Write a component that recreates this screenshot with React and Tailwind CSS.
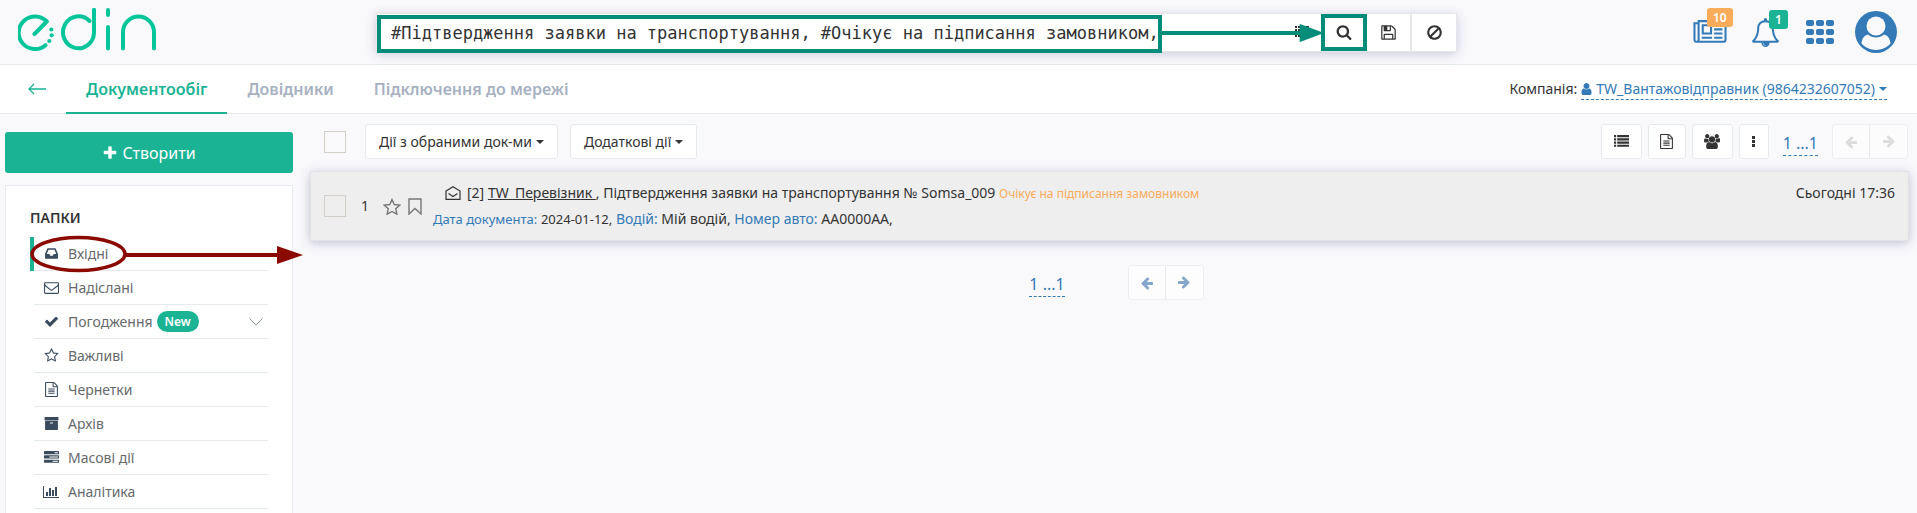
import React from "react";

const ICONS = {
  search: { box: "0 0 1792 1792", d: "M1216 832q0-185-131.500-316.500t-316.500-131.500-316.500 131.500-131.500 316.500 131.500 316.500 316.500 131.500 316.500-131.500 131.500-316.500zm512 832q0 52-38 90t-90 38q-54 0-90-38l-343-342q-179 124-399 124-143 0-273.500-55.500t-225-150-150-225-55.500-273.500 55.500-273.500 150-225 225-150 273.500-55.500 273.500 55.500 225 150 150 225 55.500 273.500q0 220-124 399l343 343q37 37 37 90z" },
  save: { box: "0 0 1792 1792", d: "M512 1536h768v-384h-768v384zm896 0h128v-896q0-14-10-38.500t-20-34.500l-281-281q-10-10-34-20t-39-10v416q0 40-28 68t-68 28h-576q-40 0-68-28t-28-68v-416h-128v1280h128v-416q0-40 28-68t68-28h832q40 0 68 28t28 68v416zm-384-928v-320q0-13-9.500-22.500t-22.500-9.500h-192q-13 0-22.500 9.500t-9.500 22.500v320q0 13 9.500 22.500t22.500 9.500h192q13 0 22.500-9.500t9.500-22.500zm640 32v928q0 40-28 68t-68 28h-1344q-40 0-68-28t-28-68v-1344q0-40 28-68t68-28h928q40 0 88 20t76 48l280 280q28 28 48 76t20 88z" },
  ban: { box: "0 0 1792 1792", d: "M1440 893q0-161-87-295l-754 753q137 89 297 89 111 0 211.500-43.500t173.500-116.500 116-174.500 43-212.500zm-999 299l755-754q-135-91-300-91-148 0-273 73t-198 199-73 274q0 162 89 299zm1223-299q0 157-61 300t-163.500 246-245 164-298.500 61-298.500-61-245-164-163.500-246-61-300 61-299.500 163.500-245.500 245-164 298.500-61 298.500 61 245 164 163.500 245.500 61 299.500z" },
  file: { box: "0 0 1792 1792", d: "M1596 380q28 28 48 76t20 88v1152q0 40-28 68t-68 28h-1344q-40 0-68-28t-28-68v-1600q0-40 28-68t68-28h896q40 0 88 20t76 48zm-444-244v376h376q-10-29-22-41l-313-313q-12-12-41-22zm384 1528v-1024h-416q-40 0-68-28t-28-68v-416h-768v1536h1280zm-1024-864q0-14 9-23t23-9h704q14 0 23 9t9 23v64q0 14-9 23t-23 9h-704q-14 0-23-9t-9-23v-64zm736 224q14 0 23 9t9 23v64q0 14-9 23t-23 9h-704q-14 0-23-9t-9-23v-64q0-14 9-23t23-9h704zm0 256q14 0 23 9t9 23v64q0 14-9 23t-23 9h-704q-14 0-23-9t-9-23v-64q0-14 9-23t23-9h704z" },
  star: { box: "0 0 1792 1792", d: "M1201 1004l306-297-422-62-189-382-189 382-422 62 306 297-73 421 378-199 377 199zm527-357q0 22-26 48l-363 354 86 500q1 7 1 20 0 50-41 50-19 0-40-12l-449-236-449 236q-22 12-40 12-21 0-31.500-14.500t-10.500-35.500q0-6 2-20l86-500-364-354q-25-27-25-48 0-37 56-46l502-73 225-455q19-41 49-41t49 41l225 455 502 73q56 9 56 46z" },
  check: { box: "0 0 1792 1792", d: "M1671 566q0 40-28 68l-724 724-136 136q-28 28-68 28t-68-28l-136-136-362-362q-28-28-28-68t28-68l136-136q28-28 68-28t68 28l294 295 656-657q28-28 68-28t68 28l136 136q28 28 28 68z" },
  plus: { box: "0 0 1792 1792", d: "M1600 736v192q0 40-28 68t-68 28h-416v416q0 40-28 68t-68 28h-192q-40 0-68-28t-28-68v-416h-416q-40 0-68-28t-28-68v-192q0-40 28-68t68-28h416v-416q0-40 28-68t68-28h192q40 0 68 28t28 68v416h416q40 0 68 28t28 68z" },
  arrow: { box: "0 0 1792 1792", d: "M1664 896v128q0 53-32.500 90.500t-84.500 37.500h-704l293 294q38 36 38 90t-38 90l-75 76q-37 37-90 37-52 0-91-37l-651-652q-37-37-37-90 0-52 37-91l651-650q38-38 91-38 52 0 90 38l75 74q38 38 38 91t-38 91l-293 293h704q52 0 84.500 37.500t32.500 90.500z" },
  envelope: { box: "0 0 1792 1792", d: "M1664 1504v-768q-32 36-69 66-268 206-426 338-51 43-83 67t-86.500 48.500-102.500 24.500h-2q-48 0-102.500-24.500t-86.500-48.500-83-67q-158-132-426-338-37-30-69-66v768q0 13 9.500 22.500t22.500 9.500h1472q13 0 22.500-9.500t9.500-22.500zm0-1051v-24.500l-.5-13-3-12.500-5.500-9-9-7.500-14-2.500h-1472q-13 0-22.500 9.500t-9.500 22.500q0 168 147 284 193 152 401 317 6 5 35 29.500t46 37.500 44.500 31.500 50.500 27.500 43 9h2q20 0 43-9t50.500-27.500 44.500-31.500 46-37.500 35-29.500q208-165 401-317 54-43 100.500-115.500t46.500-131.500zm128-37v1088q0 66-47 113t-113 47h-1472q-66 0-113-47t-47-113v-1088q0-66 47-113t113-47h1472q66 0 113 47t47 113z" },
  inbox: { box: "0 0 1792 1792", d: "M1151 960h316q-1-3-2.500-8t-2.500-8l-212-496h-708l-212 496q-1 2-2.500 8t-2.500 8h316l95 192h320zm513 30v482q0 26-19 45t-45 19h-1408q-26 0-45-19t-19-45v-482q0-62 25-123l238-552q10-25 36.500-42t52.500-17h832q26 0 52.500 17t36.500 42l238 552q25 61 25 123z" },
  archive: { box: "0 0 1792 1792", d: "M1088 832q0-26-19-45t-45-19h-256q-26 0-45 19t-19 45 19 45 45 19h256q26 0 45-19t19-45zm576-192v960q0 26-19 45t-45 19h-1408q-26 0-45-19t-19-45v-960q0-26 19-45t45-19h1408q26 0 45 19t19 45zm64-448v256q0 26-19 45t-45 19h-1536q-26 0-45-19t-19-45v-256q0-26 19-45t45-19h1536q26 0 45 19t19 45z" },
  chart: { box: "0 0 2048 1792", d: "M640 896v512h-256v-512h256zm384-512v1024h-256v-1024h256zm1024 1152v128h-2048v-1536h128v1408h1920zm-640-896v768h-256v-768h256zm384-384v1152h-256v-1152h256z" },
  user: { box: "192 0 1408 1792", d: "M1536 1399q0 109-62.500 187t-150.500 78h-854q-88 0-150.500-78t-62.500-187q0-85 8.500-160.500t31.500-152 58.500-131 94-89 134.500-34.500q131 128 313 128t313-128q76 0 134.500 34.500t94 89 58.500 131 31.500 152 8.500 160.500zm-256-887q0 159-112.500 271.500t-271.500 112.500-271.500-112.500-112.500-271.500 112.500-271.500 271.500-112.500 271.500 112.500 112.500 271.500z" },
  news: { box: "0 0 2048 1792", d: "M1024 512h-384v384h384v-384zm128 640v128h-640v-128h640zm0-768v640h-640v-640h640zm640 768v128h-512v-128h512zm0-256v128h-512v-128h512zm0-256v128h-512v-128h512zm0-256v128h-512v-128h512zm-1536 960v-960h-128v960q0 26 19 45t45 19 45-19 19-45zm1664 0v-1088h-1536v1088q0 33-11 64h1483q26 0 45-19t19-45zm128-1216v1216q0 80-56 136t-136 56h-1664q-80 0-136-56t-56-136v-1088h256v-128h1792z" },
  bell: { box: "0 0 1792 1792", d: "M912 1696q0-16-16-16-59 0-101.500-42.500t-42.500-101.500q0-16-16-16t-16 16q0 73 51.500 124.500t124.500 51.500q16 0 16-16zm-666-288h1300q-266-300-266-832 0-51-24-105t-69-103-121.500-80.500-169.500-31.500-169.500 31.500-121.500 80.500-69 103-24 105q0 532-266 832zm1482 0q0 52-38 90t-90 38h-448q0 106-75 181t-181 75-181-75-75-181h-448q-52 0-90-38t-38-90q50-42 91-88t85-119.500 74.500-158.500 50-206 19.500-260q0-152 117-282.500t307-158.500q-8-19-8-39 0-40 28-68t68-28 68 28 28 68q0 20-8 39 190 28 307 158.500t117 282.500q0 139 19.500 260t50 206 74.500 158.500 85 119.500 91 88z" },
  users: { box: "-64 0 1920 1792", d: "M529 896q-162 5-265 128h-134q-82 0-138-40.500t-56-118.500q0-353 124-353 6 0 43.500 21t97.500 42.500 119 21.500q67 0 133-23-5 37-5 66 0 159 93 290zm1071 637q0 120-73 189.500t-194 69.500h-874q-121 0-194-69.500t-73-189.500q0-53 3.500-103.500t14-109 26.500-108.500 43-97.500 62-81 85.500-53.500 111.500-20q10 0 43 21.500t73 48 107 48 135 21.500 135-21.500 107-48 73-48 43-21.500q61 0 111.500 20t85.500 53.500 62 81 43 97.500 26.500 108.500 14 109 3.500 103.500zm-1024-1277q0 106-75 181t-181 75-181-75-75-181 75-181 181-75 181 75 75 181zm704 384q0 159-112.500 271.500t-271.500 112.500-271.500-112.500-112.500-271.500 112.500-271.500 271.500-112.500 271.500 112.500 112.500 271.500zm576 225q0 78-56 118.500t-138 40.500h-134q-103-123-265-128 93-131 93-290 0-29-5-66 66 23 133 23 59 0 119-21.500t97.500-42.500 43.500-21q124 0 124 353zm-128-609q0 106-75 181t-181 75-181-75-75-181 75-181 181-75 181 75 75 181z" },
  list: { box: "0 0 14 14", d: "M0 1h2v2h-2zM3 1h11v2h-11zM0 4h2v2h-2zM3 4h11v2h-11zM0 7h2v2h-2zM3 7h11v2h-11zM0 10h2v2h-2zM3 10h11v2h-11z" },
  dots: { box: "0 0 4 14", d: "M0 1h3v3h-3zM0 5h3v3h-3zM0 9h3v3h-3z" },
  tasks: { box: "0 0 1792 1792", d: "M1024 1408h640v-128h-640v128zm-384-512h1024v-128h-1024v128zm640-512h384v-128h-384v128zm512 832v256q0 26-19 45t-45 19h-1664q-26 0-45-19t-19-45v-256q0-26 19-45t45-19h1664q26 0 45 19t19 45zm0-512v256q0 26-19 45t-45 19h-1664q-26 0-45-19t-19-45v-256q0-26 19-45t45-19h1664q26 0 45 19t19 45zm0-512v256q0 26-19 45t-45 19h-1664q-26 0-45-19t-19-45v-256q0-26 19-45t45-19h1664q26 0 45 19t19 45z" },
};

function Icon({ name, className }) {
  return (
    <svg viewBox={ICONS[name].box} fill="currentColor" aria-hidden="true" className={"shrink-0 " + className}>
      <path d={ICONS[name].d} />
    </svg>
  );
}

function Caret() {
  return (
    <svg viewBox="0 0 8 4" fill="currentColor" aria-hidden="true" className="h-1 w-2 shrink-0">
      <path d="M0 0h8L4 4z" />
    </svg>
  );
}

function Logo() {
  return (
    <svg viewBox="0 0 140 44" fill="none" stroke="#06c59b" strokeWidth="4" strokeLinecap="round" strokeLinejoin="round" className="h-11 w-[140px]" role="img" aria-label="edin">
      <path d="M16.500 26L28.800 13.500A16.300 16.300 0 1 0 27.500 37.200" />
      <path d="M76 2v22.500a15.500 16 0 1 1-4.500-11.500" />
      <path d="M76 24.500V2" />
      <path d="M90 2v5M90 19v21.500" />
      <path d="M105 40.500V24.500a15.500 16 0 0 1 31 0v16" />
      <g fill="#06c59b" stroke="none">
        <circle cx="33.300" cy="21.500" r="2.100" />
        <circle cx="33.700" cy="27.300" r="2.100" />
        <circle cx="31.300" cy="33" r="2.100" />
      </g>
    </svg>
  );
}

const FOLDERS = [
  { icon: "inbox", label: "Вхідні", active: true },
  { icon: "envelope", label: "Надіслані" },
  { icon: "check", label: "Погодження", badge: "New", expandable: true },
  { icon: "star", label: "Важливі" },
  { icon: "file", label: "Чернетки" },
  { icon: "archive", label: "Архів" },
  { icon: "tasks", label: "Масові дії" },
  { icon: "chart", label: "Аналітика" },
];

function Header() {
  return (
    <header className="flex h-[65px] items-center border-b border-[#e7eaec]">
      <a href="#home" className="w-[376px] shrink-0 pl-[18px] pb-1">
        <Logo />
      </a>
      <form className="relative flex h-[39px] min-w-0 flex-1 border border-[#e5e6e7] bg-white shadow-[0_2px_10px_rgba(60,60,110,0.25)]">
        <div className="relative flex min-w-0 flex-1">
          <input
            aria-label="Пошук"
            defaultValue="#Підтвердження заявки на транспортування, #Очікує на підписання замовником,"
            className="mt-px h-[38px] w-[785px] shrink-0 border-4 border-[#028d7a] bg-white pt-0 pr-0 pb-[2px] pl-[10px] font-['DejaVu_Sans_Mono',monospace] text-[17px] text-[#333] outline-none"
          />
          <div className="relative flex flex-1 items-center justify-end pr-3">
            <Icon name="list" className="size-[14px] text-[#333]" />
            <svg viewBox="0 0 160 18" preserveAspectRatio="xMaxYMid slice" aria-hidden="true" className="absolute top-[10px] -right-[3px] left-0 h-[18px] w-[calc(100%+3px)]">
              <path d="M-200 9H140" stroke="#028d7a" strokeWidth="4" />
              <path d="M136 0l24 9l-24 9z" fill="#028d7a" />
            </svg>
          </div>
        </div>
        <button type="button" aria-label="Знайти" className="flex h-[37px] w-[46px] items-center justify-center border-4 border-[#028d7a] text-[#333]">
          <Icon name="search" className="size-4" />
        </button>
        <button type="button" aria-label="Зберегти" className="flex w-[45px] items-center justify-center border-r-2 border-[#e5e6e7] text-[#333]">
          <Icon name="save" className="size-[17px]" />
        </button>
        <button type="button" aria-label="Очистити" className="flex w-[44px] items-center justify-center text-[#333]">
          <Icon name="ban" className="size-[17px]" />
        </button>
      </form>
      <div className="flex w-[460px] shrink-0 items-center justify-end pr-5 text-[#337ab7]">
        <button type="button" aria-label="Новини" className="relative mr-6">
          <Icon name="news" className="h-[29px] w-[34px]" />
          <span className="absolute -top-[10px] left-[14px] rounded-[3px] bg-[#f8ac59] px-[6px] text-xs leading-[19px] font-semibold text-white">10</span>
        </button>
        <button type="button" aria-label="Сповіщення" className="relative mr-[26px]">
          <Icon name="bell" className="size-[29px]" />
          <span className="absolute -top-[8px] left-[18px] rounded-[3px] bg-[#1ab394] px-[6px] text-xs leading-[19px] font-semibold text-white">1</span>
        </button>
        <button type="button" aria-label="Застосунки" className="mr-[21px] grid grid-cols-3 gap-x-[2px] gap-y-[3px]">
          {[1, 2, 3, 4, 5, 6, 7, 8, 9].map((n) => (
            <span key={n} className="h-[6px] w-2 rounded-[2px] bg-[#337ab7]" />
          ))}
        </button>
        <button type="button" aria-label="Профіль">
          <svg viewBox="0 0 42 42" className="size-[42px]" aria-hidden="true">
            <circle cx="21" cy="21" r="21" fill="#337ab7" />
            <circle cx="21" cy="15" r="9.500" fill="#f9f9fc" />
            <path d="M6.500 32.500C7 27 9.500 24.500 13 23.500c4.500 4 11.500 4 16 0c3.500 1 6 3.500 6.500 9C28 41 14 41 6.500 32.500z" fill="#f9f9fc" />
          </svg>
        </button>
      </div>
    </header>
  );
}

function Nav() {
  return (
    <nav className="flex h-[49px] items-stretch border-b border-[#e7eaec] bg-white pr-[30px] pl-7">
      <a href="#back" aria-label="Назад" className="flex w-[38px] items-center text-[#1ab394]">
        <svg viewBox="0 0 18 12" fill="none" stroke="currentColor" strokeWidth="1.300" className="h-3 w-[18px]">
          <path d="M6 1L1 6l5 5M1 6h17" />
        </svg>
      </a>
      <a href="#docs" className="-mb-px flex items-center border-b-2 border-[#1ab394] px-5 text-base font-semibold text-[#1ab394]">Документообіг</a>
      <a href="#refs" className="flex items-center px-5 text-base font-semibold text-[#a7b1c2]">Довідники</a>
      <a href="#network" className="flex items-center px-5 text-base font-semibold text-[#a7b1c2]">Підключення до мережі</a>
      <div className="ml-auto flex items-center gap-1 text-sm text-[#333]">
        Компанія:
        <a href="#company" className="flex items-center gap-1 border-b border-dashed border-[#337ab7] text-[#337ab7]">
          <Icon name="user" className="h-[14px] w-[11px]" />
          TW_Вантажовідправник (9864232607052)
          <Caret />
        </a>
      </div>
    </nav>
  );
}

function Sidebar() {
  return (
    <aside className="w-[288px] shrink-0">
      <button type="button" className="flex h-[41px] w-full items-center justify-center gap-1 rounded-[3px] bg-[#1ab394] text-base text-white">
        <Icon name="plus" className="size-4" />
        Створити
      </button>
      <div className="mt-3 border border-[#e7eaf4] bg-white px-6 pt-3 pb-10">
        <h2 className="flex h-[39px] items-center text-sm font-semibold text-[#333]">ПАПКИ</h2>
        <ul>
          {FOLDERS.map((f) => (
            <li key={f.label} className={f.active ? "border-l-4 border-[#1ab394]" : "pl-1"}>
              <a href="#folder" className="flex h-[34px] items-center border-b border-[#e7eaec] pr-[5px] text-sm text-[#676a6c]">
                <span className="flex w-[34px] justify-center">
                  <Icon name={f.icon} className={f.icon === "chart" ? "h-[14px] w-4 text-[#3b4b5e]" : "size-[15px] text-[#3b4b5e]"} />
                </span>
                {f.label}
                {f.badge && <span className="ml-1 rounded-full bg-[#1ab394] px-2 text-xs leading-[21px] font-semibold text-white">{f.badge}</span>}
                {f.expandable && (
                  <svg viewBox="0 0 14 8" fill="none" stroke="#8a9099" strokeWidth="1" className="ml-auto h-2 w-[14px]" aria-hidden="true">
                    <path d="M.5 .5L7 7l6.500-6.500" />
                  </svg>
                )}
              </a>
            </li>
          ))}
        </ul>
      </div>
    </aside>
  );
}

function Pager({ tone }) {
  return (
    <div className="flex items-center">
      <a href="#page" className="mt-1 border-b border-dashed border-[#337ab7] text-base text-[#337ab7]">1 ...1</a>
      <div className={tone === "muted" ? "ml-[14px] flex h-[35px] rounded-[3px] border border-[#eceef1] bg-[#fcfcfd] text-[#dcdcdc]" : "ml-[63px] flex h-[35px] rounded-[3px] border border-[#eceef1] bg-[#fdfdfe] text-[#85a5cb]"}>
        <button type="button" aria-label="Попередня" className="flex w-[37px] items-center justify-center border-r border-[#e7eaec]">
          <Icon name="arrow" className="size-[14px]" />
        </button>
        <button type="button" aria-label="Наступна" className="flex w-[37px] items-center justify-center">
          <Icon name="arrow" className="size-[14px] rotate-180" />
        </button>
      </div>
    </div>
  );
}

function Toolbar() {
  return (
    <div className="flex items-center pr-px pl-[14px]">
      <input type="checkbox" aria-label="Обрати всі" className="size-[22px] appearance-none border border-[#d2cec8]" />
      <button type="button" className="ml-[19px] flex h-[35px] items-center gap-1 rounded-[3px] border border-[#e7eaec] bg-white px-[13px] text-sm text-[#333]">
        Дії з обраними док-ми
        <Caret />
      </button>
      <button type="button" className="ml-3 flex h-[35px] items-center gap-1 rounded-[3px] border border-[#e7eaec] bg-white px-[13px] text-sm text-[#333]">
        Додаткові дії
        <Caret />
      </button>
      <div className="ml-auto flex items-center gap-[6px] text-[#333]">
        <button type="button" aria-label="Список" className="flex h-[35px] w-[41px] items-center justify-center rounded-[3px] border border-[#e7eaec] bg-white">
          <Icon name="list" className="size-[15px]" />
        </button>
        <button type="button" aria-label="Документ" className="flex h-[35px] w-[38px] items-center justify-center rounded-[3px] border border-[#e7eaec] bg-white">
          <Icon name="file" className="size-[15px]" />
        </button>
        <button type="button" aria-label="Користувачі" className="flex h-[35px] w-[41px] items-center justify-center rounded-[3px] border border-[#e7eaec] bg-white">
          <Icon name="users" className="h-[15px] w-4" />
        </button>
        <button type="button" aria-label="Ще" className="mr-2 flex h-[35px] w-[30px] items-center justify-center rounded-[3px] border border-[#e7eaec] bg-white">
          <Icon name="dots" className="h-[14px] w-1" />
        </button>
        <Pager tone="muted" />
      </div>
    </div>
  );
}

function DocumentRow() {
  return (
    <article className="mt-3 flex h-[70px] border border-[#e0e2e6] bg-[#eee] pr-[13px] pl-[13px] text-sm text-[#333] shadow-[0_2px_10px_rgba(60,60,110,0.3)]">
      <div className="flex items-center">
        <input type="checkbox" aria-label="Обрати документ" className="size-[22px] appearance-none border border-[#d2cec8]" />
        <span className="ml-[15px] w-[22px]">1</span>
        <button type="button" aria-label="Важливе">
          <svg viewBox="0 0 18 17" fill="none" stroke="#777" strokeWidth="1.400" className="h-[17px] w-[18px]">
            <path d="M9 1.500l2.300 5 5.500.6-4.100 3.700 1.200 5.400L9 13.500l-4.900 2.700 1.200-5.400L1.200 7.100l5.500-.6z" />
          </svg>
        </button>
        <button type="button" aria-label="Закладка" className="ml-[7px]">
          <svg viewBox="0 0 14 17" fill="none" stroke="#777" strokeWidth="1.400" className="h-[17px] w-[14px]">
            <path d="M1 1h12v15l-6-5.500L1 16z" />
          </svg>
        </button>
      </div>
      <div className="ml-[11px] min-w-0 flex-1 pt-[9px]">
        <p className="flex items-center pl-3 leading-6">
          <svg viewBox="0 0 16 14" fill="none" stroke="#333" strokeWidth="1.200" className="mr-[6px] h-[14px] w-4" aria-hidden="true">
            <path d="M1 5l7-4.300L15 5v8.300H1zM3.500 7.500L8 10.500l4.500-3" />
          </svg>
          <span className="whitespace-pre">
            [2] <a href="#sender" className="underline">TW_Перевізник </a>, Підтвердження заявки на транспортування № Somsa_009 <span className="text-xs text-[#f8ac59]">Очікує на підписання замовником</span>
          </span>
        </p>
        <p className="leading-7">
          <span className="text-[13px] text-[#337ab7]">Дата документа:</span> <span className="text-[13px]">2024-01-12,</span>{" "}
          <span className="text-[#337ab7]">Водій:</span> Мій водій, <span className="text-[#337ab7]">Номер авто:</span> АА0000АА,
        </p>
      </div>
      <time className="pt-[9px] leading-6">Сьогодні 17:36</time>
    </article>
  );
}

export default function App() {
  return (
    <div className="relative min-h-screen overflow-x-hidden bg-[#f9f9fc] font-['Noto_Sans',sans-serif]">
      <Header />
      <Nav />
      <div className="flex pl-[5px]">
        <div className="pt-[18px]">
          <Sidebar />
        </div>
        <main className="ml-[17px] min-w-0 flex-1 pt-[10px] pr-2">
          <Toolbar />
          <DocumentRow />
          <div className="mt-6 flex justify-center pl-[14px]">
            <Pager tone="normal" />
          </div>
        </main>
      </div>
      <svg viewBox="0 0 274 38" className="pointer-events-none absolute top-[235px] left-[30px] h-[38px] w-[274px]" aria-hidden="true">
        <ellipse cx="48.500" cy="19" rx="46.500" ry="16.500" fill="none" stroke="#8b0a00" strokeWidth="3.500" />
        <path d="M95 20H250" stroke="#8b0a00" strokeWidth="4" />
        <path d="M247 11l26 9l-26 9z" fill="#8b0a00" />
      </svg>
    </div>
  );
}
